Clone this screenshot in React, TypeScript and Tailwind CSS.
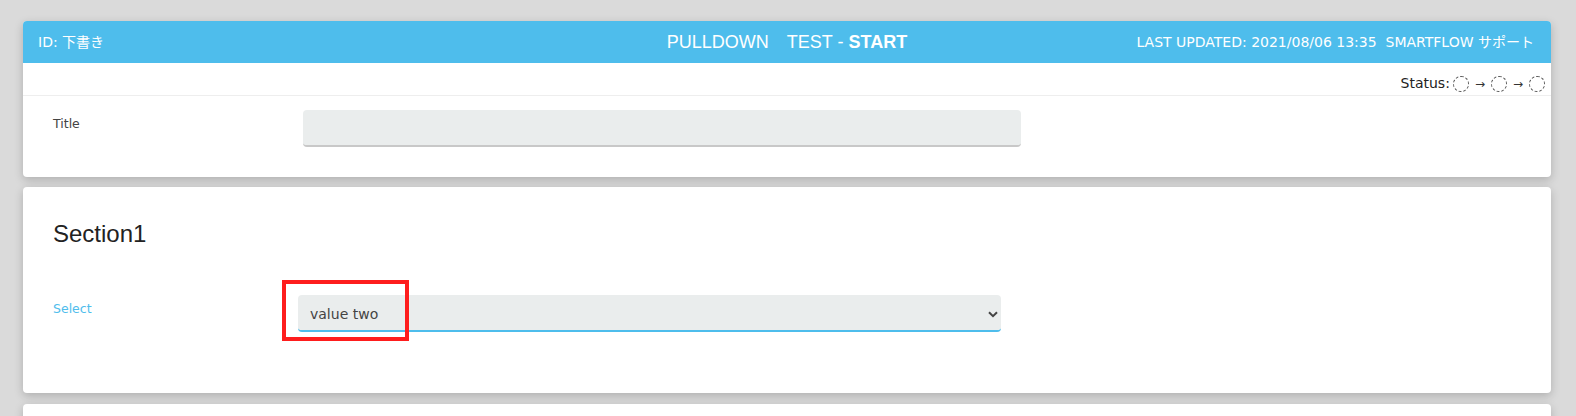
import React from "react";

const Circle = () => (
  <span className="block w-4 h-4 rounded-full border border-dashed border-[#555]" />
);

const Arrow = () => (
  <span className="mx-[6px] text-[12px] leading-none text-[#333]">→</span>
);

const App = () => {
  return (
    <div className="min-h-screen bg-[#dadada] pt-[21px] pl-[23px] pr-[25px] pb-4 font-['DejaVu_Sans','Noto_Sans_CJK_JP',sans-serif]">
      {/* Header card */}
      <div className="rounded-[4px] bg-white shadow-[0_3px_10px_rgba(0,0,0,0.2)] overflow-hidden">
        <div className="h-[42px] bg-[#4ebdec] text-white grid grid-cols-[1fr_auto_1fr] items-center">
          <div className="pl-[15px] text-[14px]">ID: 下書き</div>
          <div className="text-[18px] font-['Liberation_Sans','Noto_Sans_CJK_JP',sans-serif]">
            PULLDOWN　TEST - <span className="font-bold">START</span>
          </div>
          <div className="pr-[17px] text-[14px] text-right whitespace-nowrap">
            LAST UPDATED: 2021/08/06 13:35&nbsp; SMARTFLOW サポート
          </div>
        </div>

        <div className="h-[33px] pt-[9px] pr-[6px] flex items-center justify-end border-b border-[#eee]">
          <span className="mr-[3px] text-[14px] text-[#222]">Status:</span>
          <Circle />
          <Arrow />
          <Circle />
          <Arrow />
          <Circle />
        </div>

        <div className="flex pl-[30px] pt-[14px] pb-[30px]">
          <div className="w-[250px] shrink-0 mt-[4px] text-[12.5px] leading-[20px] text-[#444]">
            Title
          </div>
          <div className="w-[718px] h-[37px] rounded-[4px] bg-[#eaeded] border-b-2 border-[#c8c8c8]" />
        </div>
      </div>

      {/* Section1 */}
      <div className="mt-[10px] rounded-[4px] bg-white shadow-[0_3px_10px_rgba(0,0,0,0.2)] pt-[31px] px-[30px] pb-[61px]">
        <h2 className="text-[24px] leading-[32px] text-[#222] font-['Liberation_Sans',sans-serif]">
          Section1
        </h2>
        <div className="mt-[45px] flex">
          <div className="w-[245px] shrink-0 mt-[4px] text-[12.5px] leading-[20px] text-[#4fbdec]">
            Select
          </div>
          <div className="relative w-[703px]">
            <select
              defaultValue="two"
              className="block w-full h-[37px] appearance-none rounded-[4px] bg-[#eaeded] border-0 border-b-2 border-[#4ebdec] pl-[12px] pt-[4px] text-[14px] text-[#444] outline-none"
            >
              <option value="one">value one</option>
              <option value="two">value two</option>
              <option value="three">value three</option>
            </select>
            <svg
              className="absolute right-[3px] top-[16px] pointer-events-none"
              width="10"
              height="7"
              viewBox="0 0 10 7"
              fill="none"
            >
              <path d="M1 1.2 5 5.2 9 1.2" stroke="#444" strokeWidth="2" />
            </svg>
            {/* annotation box */}
            <div className="absolute left-[-16px] top-[-15px] w-[127px] h-[61px] border-4 border-[#fe1d1d] pointer-events-none" />
          </div>
        </div>
      </div>

      <div className="mt-[11px] h-[200px] rounded-[4px] bg-white shadow-[0_3px_10px_rgba(0,0,0,0.2)]" />
    </div>
  );
};

export default App;
